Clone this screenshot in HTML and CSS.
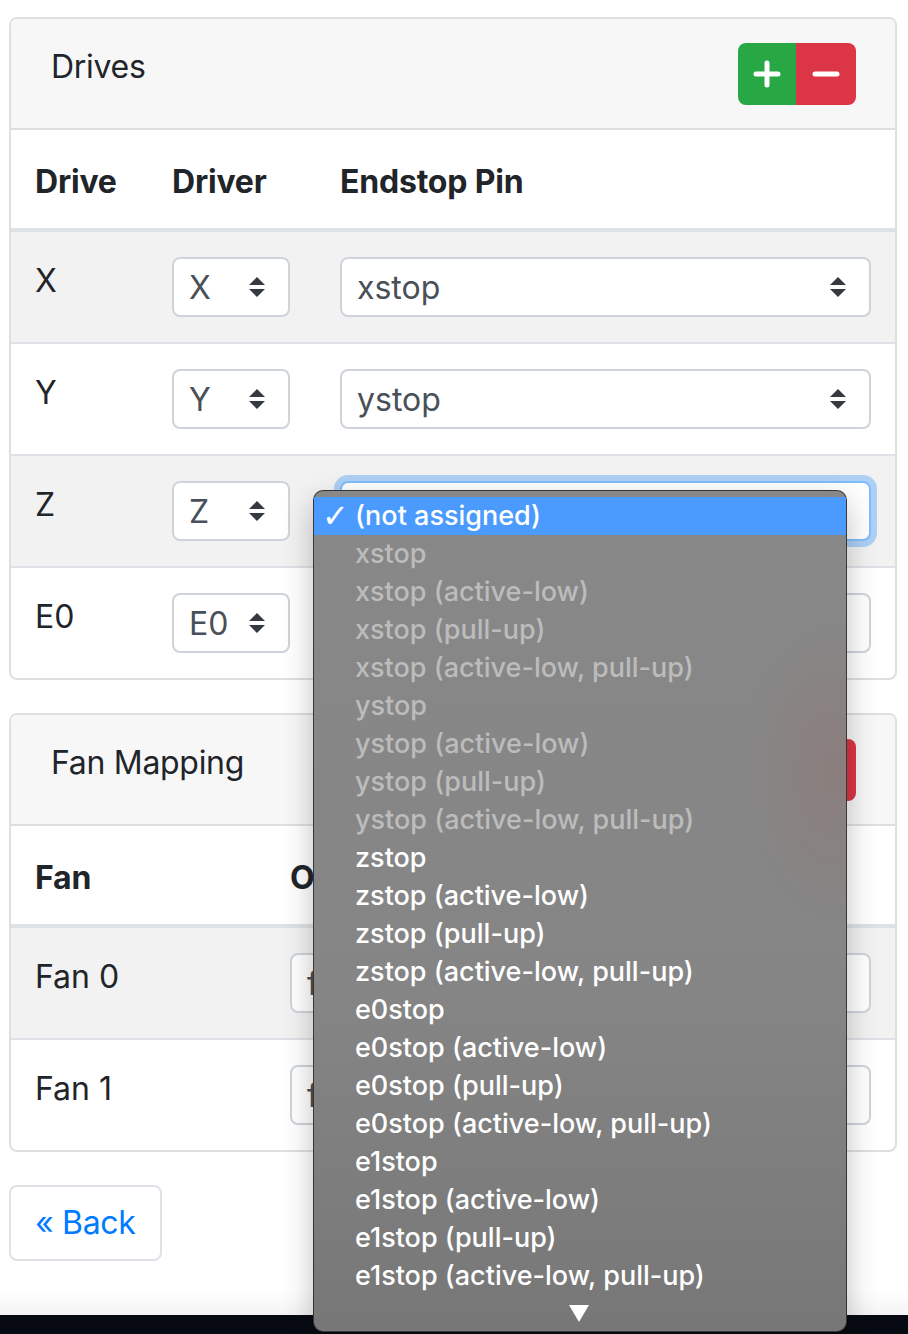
FILE: index.html
```html
<!DOCTYPE html>
<html>
<head>
<meta charset="utf-8">
<link rel="stylesheet" href="styles.css">
</head>
<body>
<div class="page">
  <div class="card">
    <div class="card-header">
      <h5 class="title">Drives</h5>
      <div class="btn-group">
        <span class="btn btn-success"><svg width="28" height="28" viewBox="0 0 28 28"><path d="M14 3v22M3 14h22" stroke="#fff" stroke-width="5" stroke-linecap="round"/></svg></span>
        <span class="btn btn-danger"><svg width="28" height="28" viewBox="0 0 28 28"><path d="M3 14h22" stroke="#fff" stroke-width="5" stroke-linecap="round"/></svg></span>
      </div>
    </div>
    <table class="table">
      <colgroup><col class="c-drive"><col class="c-driver"><col></colgroup>
      <thead><tr><th>Drive</th><th>Driver</th><th>Endstop Pin</th></tr></thead>
      <tbody>
        <tr class="odd"><td>X</td><td><div class="sel sel-sm"><span>X</span><svg class="arr" viewBox="0 0 16 20"><path d="M8 0L16 8H0Z M0 12H16L8 20Z"/></svg></div></td><td><div class="sel"><span>xstop</span><svg class="arr" viewBox="0 0 16 20"><path d="M8 0L16 8H0Z M0 12H16L8 20Z"/></svg></div></td></tr>
        <tr><td>Y</td><td><div class="sel sel-sm"><span>Y</span><svg class="arr" viewBox="0 0 16 20"><path d="M8 0L16 8H0Z M0 12H16L8 20Z"/></svg></div></td><td><div class="sel"><span>ystop</span><svg class="arr" viewBox="0 0 16 20"><path d="M8 0L16 8H0Z M0 12H16L8 20Z"/></svg></div></td></tr>
        <tr class="odd"><td>Z</td><td><div class="sel sel-sm"><span>Z</span><svg class="arr" viewBox="0 0 16 20"><path d="M8 0L16 8H0Z M0 12H16L8 20Z"/></svg></div></td><td><div class="sel focus"><span></span><svg class="arr" viewBox="0 0 16 20"><path d="M8 0L16 8H0Z M0 12H16L8 20Z"/></svg></div></td></tr>
        <tr><td>E0</td><td><div class="sel sel-sm"><span>E0</span><svg class="arr" viewBox="0 0 16 20"><path d="M8 0L16 8H0Z M0 12H16L8 20Z"/></svg></div></td><td><div class="sel"><span>e0stop</span><svg class="arr" viewBox="0 0 16 20"><path d="M8 0L16 8H0Z M0 12H16L8 20Z"/></svg></div></td></tr>
      </tbody>
    </table>
  </div>

  <div class="card">
    <div class="card-header">
      <h5 class="title">Fan Mapping</h5>
      <div class="btn-group">
        <span class="btn btn-success"><svg width="28" height="28" viewBox="0 0 28 28"><path d="M14 3v22M3 14h22" stroke="#fff" stroke-width="5" stroke-linecap="round"/></svg></span>
        <span class="btn btn-danger"><svg width="28" height="28" viewBox="0 0 28 28"><path d="M3 14h22" stroke="#fff" stroke-width="5" stroke-linecap="round"/></svg></span>
      </div>
    </div>
    <table class="table">
      <colgroup><col class="c-fan"><col></colgroup>
      <thead><tr><th>Fan</th><th>Output</th></tr></thead>
      <tbody>
        <tr class="odd"><td>Fan 0</td><td><div class="sel"><span>fan0</span><svg class="arr" viewBox="0 0 16 20"><path d="M8 0L16 8H0Z M0 12H16L8 20Z"/></svg></div></td></tr>
        <tr><td>Fan 1</td><td><div class="sel"><span>fan1</span><svg class="arr" viewBox="0 0 16 20"><path d="M8 0L16 8H0Z M0 12H16L8 20Z"/></svg></div></td></tr>
      </tbody>
    </table>
  </div>

  <div class="actions"><span class="btn-back">« Back</span></div>
</div>
<div class="bottom-bar"></div>

<div class="dropdown">
  <div class="opt sel-opt"><span class="check">✓</span>(not assigned)</div>
  <div class="opt dis">xstop</div>
  <div class="opt dis">xstop (active-low)</div>
  <div class="opt dis">xstop (pull-up)</div>
  <div class="opt dis">xstop (active-low, pull-up)</div>
  <div class="opt dis">ystop</div>
  <div class="opt dis">ystop (active-low)</div>
  <div class="opt dis">ystop (pull-up)</div>
  <div class="opt dis">ystop (active-low, pull-up)</div>
  <div class="opt">zstop</div>
  <div class="opt">zstop (active-low)</div>
  <div class="opt">zstop (pull-up)</div>
  <div class="opt">zstop (active-low, pull-up)</div>
  <div class="opt">e0stop</div>
  <div class="opt">e0stop (active-low)</div>
  <div class="opt">e0stop (pull-up)</div>
  <div class="opt">e0stop (active-low, pull-up)</div>
  <div class="opt">e1stop</div>
  <div class="opt">e1stop (active-low)</div>
  <div class="opt">e1stop (pull-up)</div>
  <div class="opt">e1stop (active-low, pull-up)</div>
  <div class="more"><svg width="20" height="17" viewBox="0 0 20 17"><path d="M0 0H20L10 17Z" fill="#fff"/></svg></div>
</div>
</body>
</html>
```

FILE: styles.css
```css
html, body {
  margin: 0;
  padding: 0;
}
body {
  width: 908px;
  height: 1334px;
  overflow: hidden;
  position: relative;
  background: linear-gradient(#fff 0, #fff 1290px, #f4f4f4 1315px);
  font-family: Inter, "Noto Sans", "Liberation Sans", sans-serif;
  color: #212529;
  font-size: 32px;
  line-height: 48px;
}
.page {
  padding: 17px 11px 0 9px;
}
.card {
  border: 2px solid #dfdfdf;
  border-radius: 8px;
  overflow: hidden;
  margin-bottom: 33px;
  background: #fff;
}
.card-header {
  background: #f7f7f7;
  border-bottom: 2px solid #dfdfdf;
  padding: 24px 39px 23px 40px;
  display: flex;
  justify-content: space-between;
  align-items: flex-start;
  height: 62px;
}
.title {
  margin: 0;
  font-size: 32px;
  font-weight: 400;
  line-height: 48px;
  letter-spacing: -0.3px;
}
.btn-group {
  display: flex;
  height: 62px;
  border-radius: 8px;
  overflow: hidden;
}
.btn {
  display: flex;
  align-items: center;
  justify-content: center;
  height: 62px;
}
.btn-success { background: #28a745; width: 58px; }
.btn-danger { background: #dc3545; width: 60px; }

.table {
  width: 100%;
  border-collapse: collapse;
  table-layout: fixed;
}
.c-drive { width: 137px; }
.c-driver { width: 168px; }
.c-fan { width: 255px; }
.table th {
  text-align: left;
  font-weight: 700;
  padding: 28px 24px 22px;
  border-bottom: 4px solid #dee2e6;
  vertical-align: top;
  letter-spacing: -0.2px;
}
.table td {
  padding: 25px 24px;
  border-top: 2px solid #dee2e6;
  vertical-align: top;
}
.table tbody tr:first-child td { border-top: 0; }
.table tr.odd td { background: #f2f2f2; }

.sel {
  box-sizing: border-box;
  height: 60px;
  border: 2px solid #ced4da;
  border-radius: 8px;
  background: #fff;
  display: flex;
  align-items: center;
  justify-content: space-between;
  padding: 2px 23px 0 15px;
  color: #495057;
  font-size: 32px;
}
.sel-sm { width: 118px; }
.sel .arr {
  width: 16px;
  height: 20px;
  fill: #343a40;
  margin-top: -2px;
}
.sel.focus {
  border-color: #80bdff;
  box-shadow: 0 0 0 6px rgba(0, 123, 255, 0.28);
}
.btn-back {
  display: inline-block;
  border: 2px solid #dee2e6;
  border-radius: 8px;
  padding: 13px 24px 13px;
  color: #007bff;
  line-height: 46px;
  letter-spacing: -0.3px;
}
.bottom-bar {
  position: absolute;
  left: 0;
  right: 0;
  bottom: 0;
  height: 19px;
  background: #070a12;
}

.dropdown {
  position: absolute;
  left: 313px;
  top: 490px;
  width: 534px;
  height: 842px;
  box-sizing: border-box;
  border: 1px solid rgba(30, 30, 30, 0.75);
  border-radius: 10px;
  padding-top: 6px;
  background:
    radial-gradient(ellipse 90px 150px at 520px 280px, rgba(150, 105, 100, 0.28), rgba(150, 105, 100, 0) 100%),
    linear-gradient(#888 0, #858585 60%, #777 100%);
  box-shadow: 0 12px 30px rgba(0, 0, 0, 0.25);
  overflow: hidden;
  font-size: 27px;
  font-weight: 500;
  line-height: 38px;
  color: #fff;
}
.opt {
  height: 38px;
  padding-left: 41px;
  position: relative;
  white-space: nowrap;
}
.opt.dis { color: #bcbcbc; }
.sel-opt { background: #4b9bfe; }
.check {
  position: absolute;
  left: 8px;
  top: 0;
  font-family: "DejaVu Sans", sans-serif;
  font-size: 32px;
  font-weight: 400;
}
.more {
  display: flex;
  justify-content: center;
  padding-top: 10px;
  padding-right: 2px;
}
```
